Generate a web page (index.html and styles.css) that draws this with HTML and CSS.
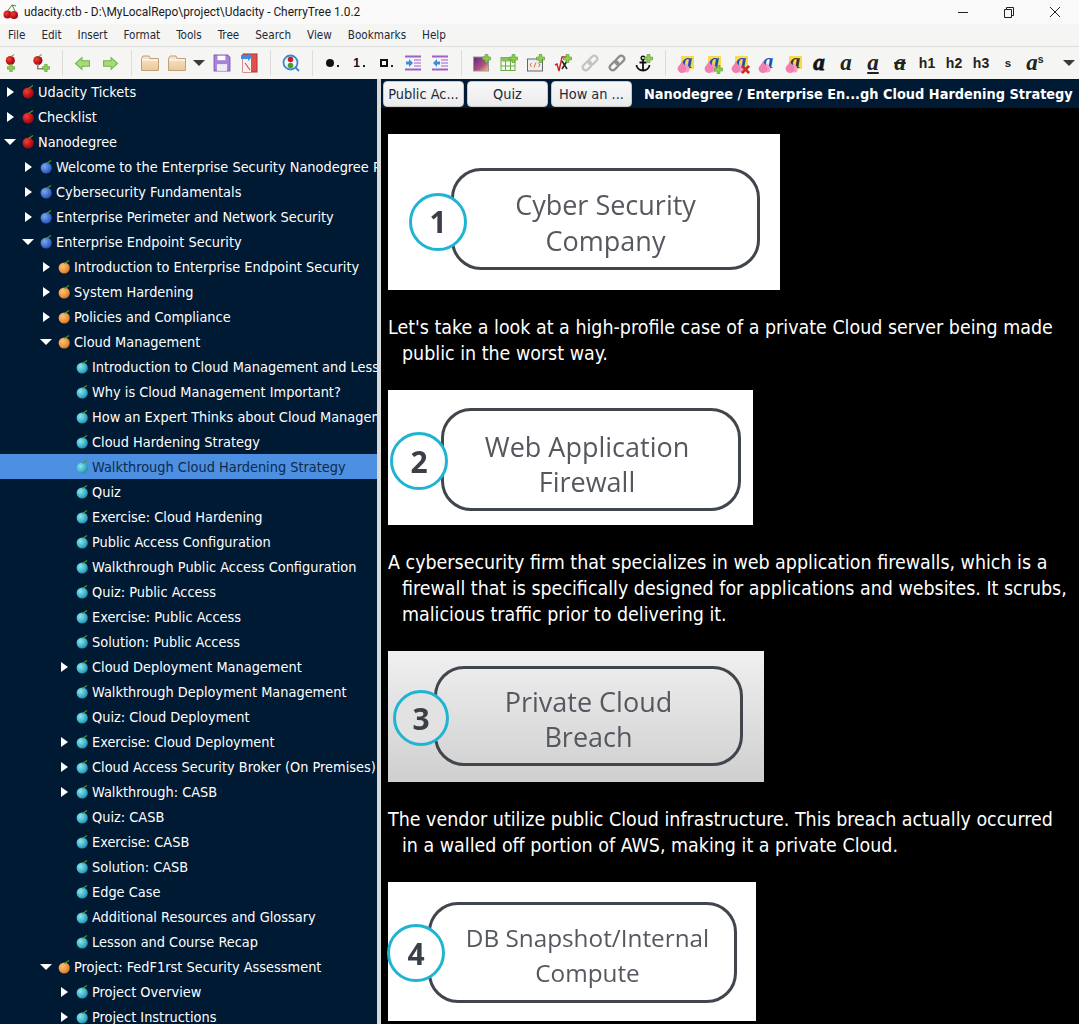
FILE: index.html
```html
<!DOCTYPE html>
<html lang="en">
<head>
<meta charset="utf-8">
<title>CherryTree</title>
<link rel="stylesheet" href="styles.css">
</head>
<body>
<svg class="defs" width="0" height="0" aria-hidden="true">
  <defs>
    <radialGradient id="gr" cx=".35" cy=".35" r=".75"><stop offset="0" stop-color="#f0403c"/><stop offset=".55" stop-color="#c4141a"/><stop offset="1" stop-color="#7c0c10"/></radialGradient>
    <radialGradient id="gb" cx=".35" cy=".35" r=".75"><stop offset="0" stop-color="#7aa8f0"/><stop offset=".6" stop-color="#3f6fd0"/><stop offset="1" stop-color="#24489a"/></radialGradient>
    <radialGradient id="go" cx=".35" cy=".35" r=".75"><stop offset="0" stop-color="#fbc27c"/><stop offset=".6" stop-color="#ef9540"/><stop offset="1" stop-color="#c46c20"/></radialGradient>
    <radialGradient id="gt" cx=".35" cy=".35" r=".75"><stop offset="0" stop-color="#8fe4ee"/><stop offset=".6" stop-color="#3fb5cc"/><stop offset="1" stop-color="#1f7f98"/></radialGradient>
    <linearGradient id="gf" x1="0" y1="0" x2="0" y2="1"><stop offset="0" stop-color="#f8e6cc"/><stop offset="1" stop-color="#e9c898"/></linearGradient>
    <linearGradient id="gi" x1="0" y1="0" x2="1" y2="1"><stop offset="0" stop-color="#5a2a72"/><stop offset=".6" stop-color="#b04f86"/><stop offset="1" stop-color="#f2cf6a"/></linearGradient>
    <symbol id="c-red" viewBox="0 0 14 14"><circle cx="6.2" cy="8" r="5.6" fill="url(#gr)"/><path d="M6.5 3.500 11 .6" stroke="#4c9a2a" stroke-width="1.200" fill="none"/></symbol>
    <symbol id="c-blue" viewBox="0 0 14 14"><circle cx="6.2" cy="8" r="5.6" fill="url(#gb)"/><path d="M6.5 3.500 11 .6" stroke="#4c9a2a" stroke-width="1.200" fill="none"/></symbol>
    <symbol id="c-orange" viewBox="0 0 14 14"><circle cx="6.2" cy="8" r="5.6" fill="url(#go)"/><path d="M6.5 3.500 11 .6" stroke="#4c9a2a" stroke-width="1.200" fill="none"/></symbol>
    <symbol id="c-teal" viewBox="0 0 14 14"><circle cx="6.2" cy="8" r="5.6" fill="url(#gt)"/><path d="M6.5 3.500 11 .6" stroke="#4c9a2a" stroke-width="1.200" fill="none"/></symbol>
    <symbol id="plus" viewBox="0 0 10 10"><path d="M3.500 .5h3v3h3v3h-3v3h-3v-3h-3v-3h3z" fill="#8fd14f" stroke="#5b9a2c" stroke-width=".8"/></symbol>
    <symbol id="drop" viewBox="0 0 14 12"><path d="M9 2C8.200 4 5.500 5.500 5.500 8a3.600 3.600 0 0 0 7.200 0C12.700 5.500 9.800 4 9 2z" fill="#f59cc6"/><path d="M5 0C4.200 3 .6 5 .6 7.800a4.400 4.200 0 0 0 8.800 0C9.400 5 5.800 3 5 0z" fill="#f27fb2"/></symbol>
    <symbol id="arrow-r" viewBox="0 0 7 10"><path d="M0 0 7 5 0 10z" fill="#fff"/></symbol>
    <symbol id="arrow-d" viewBox="0 0 12 6"><path d="M0 0h12L6 6z" fill="#fff"/></symbol>
    <symbol id="folder" viewBox="0 0 18 16"><path d="M.5 3.500 2 1h6l1 2.500h8.500v12H.5z" fill="url(#gf)" stroke="#c0a078"/><path d="M1 5h16" stroke="#fff"/></symbol>
    <symbol id="indent" viewBox="0 0 18 16"><path d="M1 1.500h16M1 14.500h16" stroke="#a060c8" stroke-width="2"/><path d="M10 5h7M10 8h7M10 11h7" stroke="#a060c8"/><path d="M2 6.500h3V4l4 4-4 4V9.500H2z" fill="#3c8ce0"/></symbol>
    <symbol id="outdent" viewBox="0 0 18 16"><path d="M1 1.500h16M1 14.500h16" stroke="#a060c8" stroke-width="2"/><path d="M10 5h7M10 8h7M10 11h7" stroke="#a060c8"/><path d="M9 6.500H6V4L2 8l4 4V9.500h3z" fill="#3c8ce0"/></symbol>
    <symbol id="link" viewBox="0 0 18 18"><g fill="none" stroke-width="2.200" transform="rotate(-45 9 9)"><rect x="0" y="6" width="10" height="6" rx="3"/><rect x="8" y="6" width="10" height="6" rx="3"/></g></symbol>
  </defs>
</svg>

<header class="titlebar">
  <svg class="app-icon" viewBox="0 0 16 16" width="16" height="16"><circle cx="4.500" cy="10.500" r="4" fill="url(#gr)"/><circle cx="11" cy="11" r="4" fill="url(#gr)"/><path d="M4.500 7 9 1l3 6" stroke="#4c8a2a" fill="none"/><path d="M9 1l4 1" stroke="#4c8a2a"/></svg>
  <span class="title-text">udacity.ctb - D:\MyLocalRepo\project\Udacity - CherryTree 1.0.2</span>
  <div class="winctl">
    <svg viewBox="0 0 46 20" width="46" height="20"><path d="M18 10.500h10" stroke="#222"/></svg>
    <svg viewBox="0 0 46 20" width="46" height="20"><path d="M18.500 7.500h7v8h-7z M20.500 7.500v-2h7v8h-2" fill="none" stroke="#222"/></svg>
    <svg viewBox="0 0 46 20" width="46" height="20"><path d="M18 5l10 10M28 5 18 15" stroke="#222" fill="none"/></svg>
  </div>
</header>

<nav class="menubar">
  <span>File</span><span>Edit</span><span>Insert</span><span>Format</span><span>Tools</span><span>Tree</span><span>Search</span><span>View</span><span>Bookmarks</span><span>Help</span>
</nav>

<div class="toolbar">
  <div class="tool t-a"><svg viewBox="0 0 20 22"><use href="#c-red" x="3" y="0" width="14" height="14"/><use href="#plus" x="5" y="12" width="10" height="10"/></svg></div>
  <div class="tool t-b"><svg viewBox="0 0 22 22"><use href="#c-red" x="1" y="0" width="14" height="14"/><path d="M7 12v6h8" stroke="#888" stroke-width="2" fill="none"/><use href="#plus" x="12" y="12" width="10" height="10"/></svg></div>
  <i class="sep"></i>
  <div class="tool"><svg viewBox="0 0 16 14" class="s16"><path d="M1 7l6-5.500v3h7v5H7v3z" fill="#a6dc78" stroke="#7ab050"/></svg></div>
  <div class="tool"><svg viewBox="0 0 16 14" class="s16"><path d="M15 7 9 1.500v3H2v5h7v3z" fill="#a6dc78" stroke="#7ab050"/></svg></div>
  <i class="sep"></i>
  <div class="tool pull"><svg viewBox="0 0 18 16" class="s18"><use href="#folder"/></svg></div>
  <div class="tool t-folder"><svg viewBox="0 0 18 16" class="s18"><use href="#folder"/></svg><svg viewBox="0 0 12 6" class="caret"><path d="M0 0h12L6 6z" fill="#3a3a3a"/></svg></div>
  <div class="tool"><svg viewBox="0 0 16 16"><path d="M1 1h12l2 2v12H1z" fill="#a884d8" stroke="#8460b8"/><rect x="4" y="1.500" width="7" height="4" fill="#fff"/><rect x="3.500" y="9" width="9" height="6" fill="#f0ecf6"/></svg></div>
  <div class="tool"><svg viewBox="0 0 18 20" class="s20"><rect x="3" y="1" width="14" height="18" fill="#e05050" stroke="#b03030"/><rect x="3" y="5" width="8" height="14" fill="#f6f0ee"/><path d="M5 10l5 7" stroke="#d03030"/><path d="M1 2h7V0l4 4-4 4V6H1z" fill="#3c8ce0"/></svg></div>
  <i class="sep"></i>
  <div class="tool"><svg viewBox="0 0 18 18" class="s20"><circle cx="8.500" cy="8.500" r="7" fill="#f4f8fc" stroke="#3c86d8" stroke-width="1.800"/><path d="M13.500 13.500 17 17" stroke="#3c86d8" stroke-width="2"/><circle cx="8.500" cy="5.500" r="2.800" fill="#cc2020"/><circle cx="8.500" cy="11.500" r="2.800" fill="#4f9a2c"/></svg></div>
  <i class="sep"></i>
  <div class="tool pull-1"><span class="bullet"></span><span class="dot"></span></div>
  <div class="tool num">1<span class="dot"></span></div>
  <div class="tool"><span class="square"></span><span class="dot"></span></div>
  <div class="tool"><svg viewBox="0 0 18 16" class="s16w"><use href="#indent"/></svg></div>
  <div class="tool"><svg viewBox="0 0 18 16" class="s16w"><use href="#outdent"/></svg></div>
  <i class="sep"></i>
  <div class="tool"><svg viewBox="0 0 18 18"><rect x=".5" y="3" width="15" height="14" fill="url(#gi)" stroke="#999"/><use href="#plus" x="9" y="0" width="9" height="9"/></svg></div>
  <div class="tool"><svg viewBox="0 0 18 18"><rect x="1" y="3.500" width="14" height="13" fill="#f4faee" stroke="#6aa84a"/><rect x="1" y="3.500" width="14" height="4" fill="#88c060"/><path d="M1 12h14M5.500 7v10M10.500 7v10" stroke="#6aa84a"/><use href="#plus" x="9" y="0" width="9" height="9"/></svg></div>
  <div class="tool"><svg viewBox="0 0 18 18"><rect x=".5" y="5" width="15" height="12" fill="#eee" stroke="#666"/><path d="M4.500 9 3 11l1.500 2M11.500 9l1.500 2-1.500 2M9 8.500 7 13.500" stroke="#e07030" fill="none"/><use href="#plus" x="9" y="0" width="9" height="9"/></svg></div>
  <div class="tool"><svg viewBox="0 0 18 18"><path d="M1 11l2-1 2 7 3-14h6" stroke="#d02020" fill="none" stroke-width="1.400"/><path d="M8 7l5 8M13 7l-5 8" stroke="#222" stroke-width="1.500"/><use href="#plus" x="9" y="0" width="9" height="9"/></svg></div>
  <div class="tool"><svg viewBox="0 0 18 18" class="link-l"><use href="#link"/></svg></div>
  <div class="tool"><svg viewBox="0 0 18 18" class="link-d"><use href="#link"/></svg></div>
  <div class="tool"><svg viewBox="0 0 18 18"><circle cx="8" cy="4" r="1.800" fill="none" stroke="#111" stroke-width="1.400"/><path d="M8 6v11M4.500 8.500h7M1.500 11c0 3 3 5.500 6.500 5.500s6.500-2.500 6.500-5.500" fill="none" stroke="#111" stroke-width="1.800"/><use href="#plus" x="9" y="0" width="9" height="9"/></svg></div>
  <i class="sep"></i>
  <div class="tool pull ink yellow"><b class="a blue">a</b><svg class="droplet"><use href="#drop"/></svg></div>
  <div class="tool ink yellow"><b class="a blue">a</b><svg class="droplet"><use href="#drop"/></svg><svg class="mark" viewBox="0 0 10 10"><use href="#plus"/></svg></div>
  <div class="tool ink yellow"><b class="a blue">a</b><svg class="droplet"><use href="#drop"/></svg><svg class="mark" viewBox="0 0 10 10"><path d="M1 1l8 8M9 1 1 9" stroke="#c83030" stroke-width="3"/></svg></div>
  <div class="tool ink"><b class="a blue">a</b><svg class="droplet"><use href="#drop"/></svg></div>
  <div class="tool ink yellow"><b class="a dark">a</b><svg class="droplet"><use href="#drop"/></svg></div>
  <div class="tool glyph"><b class="a heavy">a</b></div>
  <div class="tool glyph"><b class="a">a</b></div>
  <div class="tool glyph"><b class="a under">a</b></div>
  <div class="tool glyph"><b class="a strike">a</b></div>
  <div class="tool head">h1</div>
  <div class="tool head">h2</div>
  <div class="tool head">h3</div>
  <div class="tool head small">s</div>
  <div class="tool glyph"><b class="a">a</b><sup class="sup">s</sup></div>
  <div class="tool t-more"><svg viewBox="0 0 12 6" class="caret-more"><path d="M0 0h12L6 6z" fill="#3a3a3a"/></svg></div>
</div>

<main class="panes">
  <aside class="tree">
    <div class="row l0"><svg class="exp r"><use href="#arrow-r"/></svg><svg class="node"><use href="#c-red"/></svg><span>Udacity Tickets</span></div>
    <div class="row l0"><svg class="exp r"><use href="#arrow-r"/></svg><svg class="node"><use href="#c-red"/></svg><span>Checklist</span></div>
    <div class="row l0"><svg class="exp d"><use href="#arrow-d"/></svg><svg class="node"><use href="#c-red"/></svg><span>Nanodegree</span></div>
    <div class="row l1"><svg class="exp r"><use href="#arrow-r"/></svg><svg class="node"><use href="#c-blue"/></svg><span>Welcome to the Enterprise Security Nanodegree Program</span></div>
    <div class="row l1"><svg class="exp r"><use href="#arrow-r"/></svg><svg class="node"><use href="#c-blue"/></svg><span>Cybersecurity Fundamentals</span></div>
    <div class="row l1"><svg class="exp r"><use href="#arrow-r"/></svg><svg class="node"><use href="#c-blue"/></svg><span>Enterprise Perimeter and Network Security</span></div>
    <div class="row l1"><svg class="exp d"><use href="#arrow-d"/></svg><svg class="node"><use href="#c-blue"/></svg><span>Enterprise Endpoint Security</span></div>
    <div class="row l2"><svg class="exp r"><use href="#arrow-r"/></svg><svg class="node"><use href="#c-orange"/></svg><span>Introduction to Enterprise Endpoint Security</span></div>
    <div class="row l2"><svg class="exp r"><use href="#arrow-r"/></svg><svg class="node"><use href="#c-orange"/></svg><span>System Hardening</span></div>
    <div class="row l2"><svg class="exp r"><use href="#arrow-r"/></svg><svg class="node"><use href="#c-orange"/></svg><span>Policies and Compliance</span></div>
    <div class="row l2"><svg class="exp d"><use href="#arrow-d"/></svg><svg class="node"><use href="#c-orange"/></svg><span>Cloud Management</span></div>
    <div class="row l3"><i class="exp"></i><svg class="node"><use href="#c-teal"/></svg><span>Introduction to Cloud Management and Lessons</span></div>
    <div class="row l3"><i class="exp"></i><svg class="node"><use href="#c-teal"/></svg><span>Why is Cloud Management Important?</span></div>
    <div class="row l3"><i class="exp"></i><svg class="node"><use href="#c-teal"/></svg><span>How an Expert Thinks about Cloud Management</span></div>
    <div class="row l3"><i class="exp"></i><svg class="node"><use href="#c-teal"/></svg><span>Cloud Hardening Strategy</span></div>
    <div class="row l3 selected"><i class="exp"></i><svg class="node"><use href="#c-teal"/></svg><span>Walkthrough Cloud Hardening Strategy</span></div>
    <div class="row l3"><i class="exp"></i><svg class="node"><use href="#c-teal"/></svg><span>Quiz</span></div>
    <div class="row l3"><i class="exp"></i><svg class="node"><use href="#c-teal"/></svg><span>Exercise: Cloud Hardening</span></div>
    <div class="row l3"><i class="exp"></i><svg class="node"><use href="#c-teal"/></svg><span>Public Access Configuration</span></div>
    <div class="row l3"><i class="exp"></i><svg class="node"><use href="#c-teal"/></svg><span>Walkthrough Public Access Configuration</span></div>
    <div class="row l3"><i class="exp"></i><svg class="node"><use href="#c-teal"/></svg><span>Quiz: Public Access</span></div>
    <div class="row l3"><i class="exp"></i><svg class="node"><use href="#c-teal"/></svg><span>Exercise: Public Access</span></div>
    <div class="row l3"><i class="exp"></i><svg class="node"><use href="#c-teal"/></svg><span>Solution: Public Access</span></div>
    <div class="row l3"><svg class="exp r"><use href="#arrow-r"/></svg><svg class="node"><use href="#c-teal"/></svg><span>Cloud Deployment Management</span></div>
    <div class="row l3"><i class="exp"></i><svg class="node"><use href="#c-teal"/></svg><span>Walkthrough Deployment Management</span></div>
    <div class="row l3"><i class="exp"></i><svg class="node"><use href="#c-teal"/></svg><span>Quiz: Cloud Deployment</span></div>
    <div class="row l3"><svg class="exp r"><use href="#arrow-r"/></svg><svg class="node"><use href="#c-teal"/></svg><span>Exercise: Cloud Deployment</span></div>
    <div class="row l3"><svg class="exp r"><use href="#arrow-r"/></svg><svg class="node"><use href="#c-teal"/></svg><span>Cloud Access Security Broker (On Premises)</span></div>
    <div class="row l3"><svg class="exp r"><use href="#arrow-r"/></svg><svg class="node"><use href="#c-teal"/></svg><span>Walkthrough: CASB</span></div>
    <div class="row l3"><i class="exp"></i><svg class="node"><use href="#c-teal"/></svg><span>Quiz: CASB</span></div>
    <div class="row l3"><i class="exp"></i><svg class="node"><use href="#c-teal"/></svg><span>Exercise: CASB</span></div>
    <div class="row l3"><i class="exp"></i><svg class="node"><use href="#c-teal"/></svg><span>Solution: CASB</span></div>
    <div class="row l3"><i class="exp"></i><svg class="node"><use href="#c-teal"/></svg><span>Edge Case</span></div>
    <div class="row l3"><i class="exp"></i><svg class="node"><use href="#c-teal"/></svg><span>Additional Resources and Glossary</span></div>
    <div class="row l3"><i class="exp"></i><svg class="node"><use href="#c-teal"/></svg><span>Lesson and Course Recap</span></div>
    <div class="row l2"><svg class="exp d"><use href="#arrow-d"/></svg><svg class="node"><use href="#c-orange"/></svg><span>Project: FedF1rst Security Assessment</span></div>
    <div class="row l3"><svg class="exp r"><use href="#arrow-r"/></svg><svg class="node"><use href="#c-teal"/></svg><span>Project Overview</span></div>
    <div class="row l3"><svg class="exp r"><use href="#arrow-r"/></svg><svg class="node"><use href="#c-teal"/></svg><span>Project Instructions</span></div>
  </aside>

  <section class="content">
    <div class="tabbar">
      <button class="tab">Public Ac...</button>
      <button class="tab">Quiz</button>
      <button class="tab">How an ...</button>
      <span class="crumb">Nanodegree / Enterprise En...gh Cloud Hardening Strategy</span>
    </div>
    <article class="doc">
      <figure class="shot shot-1">
        <span class="badge">1</span>
        <div class="box"><span class="label">Cyber Security<br>Company</span></div>
      </figure>
      <p class="para"><span>Let's take a look at a high-profile case of a private Cloud server being made</span><span class="cont">public in the worst way.</span></p>
      <figure class="shot shot-2">
        <span class="badge">2</span>
        <div class="box"><span class="label">Web Application<br>Firewall</span></div>
      </figure>
      <p class="para"><span>A cybersecurity firm that specializes in web application firewalls, which is a</span><span class="cont">firewall that is specifically designed for applications and websites. It scrubs,</span><span class="cont">malicious traffic prior to delivering it.</span></p>
      <figure class="shot shot-3">
        <span class="badge">3</span>
        <div class="box"><span class="label">Private Cloud<br>Breach</span></div>
      </figure>
      <p class="para"><span>The vendor utilize public Cloud infrastructure. This breach actually occurred</span><span class="cont">in a walled off portion of AWS, making it a private Cloud.</span></p>
      <figure class="shot shot-4">
        <span class="badge">4</span>
        <div class="box"><span class="label">DB Snapshot/Internal<br>Compute</span></div>
      </figure>
    </article>
  </section>
</main>
</body>
</html>
```

FILE: styles.css
```css
* { box-sizing: border-box; }
html, body { margin: 0; height: 100%; }
body {
  width: 1079px;
  height: 1024px;
  overflow: hidden;
  display: flex;
  flex-direction: column;
  font-family: "DejaVu Sans Condensed", "DejaVu Sans", sans-serif;
  font-stretch: condensed;
  background: #f5f5f3;
}
.defs { position: absolute; }

.titlebar {
  height: 24px;
  flex: none;
  display: flex;
  align-items: center;
  background: #fafafa;
  padding-left: 3px;
}
.app-icon { flex: none; }
.title-text {
  margin-left: 5px;
  font: 11.9px Roboto, sans-serif;
  color: #1a1a1a;
  white-space: nowrap;
}
.winctl { margin-left: auto; display: flex; padding-right: 1px; }

.menubar {
  height: 23px;
  flex: none;
  display: flex;
  align-items: center;
  gap: 16px;
  padding-left: 8px;
  font-size: 11.6px;
  color: #1c2a3a;
  background: #f5f5f3;
  border-bottom: 1px solid #dddddb;
}

.toolbar {
  height: 32px;
  flex: none;
  display: flex;
  align-items: center;
  background: #f5f5f3;
}
.tool {
  width: 27px;
  height: 32px;
  flex: none;
  display: flex;
  align-items: center;
  justify-content: center;
  position: relative;
}
.tool svg { width: 18px; height: 18px; display: block; }
.tool.t-a { width: 22px; }
.tool.t-b { margin-left: 5.5px; }
.tool.pull { margin-left: -2px; }
.tool.pull-1 { margin-left: -1px; }
.tool svg.s16 { width: 18px; height: 15px; }
.tool svg.s18 { width: 18px; height: 16px; }
.tool svg.s20 { width: 18px; height: 20px; }
.tool svg.s16w { width: 18px; height: 16px; }
.tool.t-folder { width: 45px; justify-content: flex-start; padding-left: 4.5px; gap: 7px; }
.tool svg.caret { width: 12px; height: 6px; }
.tool.t-more { width: 21px; margin-left: 10px; }
.tool svg.caret-more { width: 12px; height: 6px; }
.sep {
  width: 1px;
  height: 26px;
  flex: none;
  margin: 0 7px;
  background: #dcdcda;
}
.bullet { width: 8px; height: 8px; border-radius: 50%; background: #111; }
.square { width: 8px; height: 8px; border: 2px solid #111; }
.dot { width: 2px; height: 2px; background: #222; margin-left: 3px; margin-top: 6px; }
.num { font: 700 12px "Liberation Sans", sans-serif; color: #111; }
.link-l { fill: none; stroke: #c4c4c4; }
.link-d { fill: none; stroke: #8c8c8c; }
.a {
  font: italic 700 23px/1 "Liberation Serif", serif;
  color: #222;
  position: relative;
  top: -1px;
}
.ink .a {
  position: absolute;
  left: 10px;
  top: 9px;
  width: 13px;
  height: 13px;
  line-height: 11px;
  text-align: center;
  font-size: 21px;
}
.yellow .a { background: #fcd84c; }
.a.blue { color: #1a50b8; }
.a.dark { color: #333; }
.a.heavy { -webkit-text-stroke: .8px #111; color: #111; }
.a.under { text-decoration: underline; text-decoration-thickness: 1.5px; text-underline-offset: 2px; }
.a.strike { text-decoration: line-through; text-decoration-thickness: 1.5px; }
.tool svg.droplet { position: absolute; left: 6px; top: 14px; width: 14px; height: 12px; }
.tool svg.mark { position: absolute; left: 16px; top: 18px; width: 9px; height: 9px; }
.head { font: 700 14px "Liberation Sans", sans-serif; color: #222; }
.head.small { font-size: 11.500px; }
.sup { font: 700 10.500px "Liberation Sans", sans-serif; align-self: flex-start; margin-top: 6px; color: #222; }

.panes {
  flex: 1;
  min-height: 0;
  display: flex;
}
.tree {
  width: 381px;
  flex: none;
  overflow: hidden;
  background: #001a33;
  border-right: 4px solid #d9d9d7;
}
.row {
  height: 25px;
  display: flex;
  align-items: center;
  white-space: nowrap;
  color: #fff;
  font-size: 14.4px;
}
.row.selected { background: #4d8fe0; color: #0c2a4e; }
.l0 { padding-left: 7px; }
.l1 { padding-left: 25px; }
.l2 { padding-left: 43px; }
.l3 { padding-left: 61px; }
.exp { width: 13px; height: 10px; flex: none; }
.exp.r { width: 7px; margin-right: 6px; }
.exp.d { width: 12px; height: 6px; margin-left: -3px; margin-right: 4px; }
.node { width: 14px; height: 14px; flex: none; margin-left: 2px; }
.row span { margin-left: 2px; }

.content {
  flex: 1;
  min-width: 0;
  display: flex;
  flex-direction: column;
  background: #000;
}
.tabbar {
  height: 29px;
  flex: none;
  display: flex;
  align-items: center;
  gap: 3px;
  padding-left: 2px;
  background: #001a33;
}
.tab {
  width: 81px;
  height: 26px;
  flex: none;
  padding: 0;
  border: 1px solid #c8c8c8;
  border-radius: 4px;
  background: linear-gradient(#f8f8f8, #ebebeb);
  color: #1c2a3a;
  font: 14.4px "DejaVu Sans Condensed", "DejaVu Sans", sans-serif;
  font-stretch: condensed;
  white-space: nowrap;
}
.crumb {
  margin-left: 9px;
  color: #fff;
  font-size: 14.4px;
  font-weight: 700;
  white-space: nowrap;
}
.doc {
  flex: 1;
  min-height: 0;
  overflow: hidden;
  padding: 26px 0 0 7px;
}
.para {
  margin: 25px 0 23px;
  color: #fff;
  font-size: 19.45px;
  line-height: 26px;
}
.para span { display: block; white-space: nowrap; }
.para .cont { padding-left: 14px; }

.shot {
  position: relative;
  margin: 0;
  display: flex;
  background: #fff;
  color: #55595f;
  font: 27px/36px "Open Sans", sans-serif;
  font-stretch: normal;
  text-align: center;
}
.box {
  display: flex;
  align-items: center;
  justify-content: center;
  border: 3px solid #41464d;
  border-radius: 30px;
  filter: blur(.4px);
}
.label { position: relative; }
.badge {
  position: absolute;
  z-index: 1;
  display: flex;
  align-items: center;
  justify-content: center;
  width: 58px;
  height: 58px;
  border: 3px solid #1fb4d2;
  border-radius: 50%;
  background: #fff;
  color: #3b4048;
  font-weight: 700;
  font-size: 30px;
  filter: blur(.4px);
}
.shot-1 { width: 392px; height: 156px; padding: 34px 20px 20px 63px; }
.shot-1 .box { width: 309px; height: 102px; }
.shot-1 .label { top: 4px; }
.shot-1 .badge { left: 21px; top: 59px; }
.shot-2 { width: 365px; height: 135px; padding: 18px 12px 14px 53px; line-height: 35px; }
.shot-2 .box { width: 300px; height: 103px; }
.shot-2 .label { top: 4px; left: -4px; }
.shot-2 .badge { left: 2px; top: 42px; }
.shot-3 {
  width: 376px;
  height: 131px;
  padding: 15px 21px 16px 46px;
  background: linear-gradient(#f0f0f0, #cfcfcf);
  line-height: 35px;
}
.shot-3 .box { width: 309px; height: 100px; }
.shot-3 .label { top: 3px; }
.shot-3 .badge { left: 5px; top: 39px; width: 56px; height: 56px; background: #e2e2e2; }
.shot-4 { width: 368px; height: 139px; padding: 20px 19px 18px 40px; font-size: 24.3px; line-height: 35px; }
.shot-4 .box { width: 309px; height: 101px; }
.shot-4 .label { top: 2px; left: 5px; }
.shot-4 .badge { left: -1px; top: 42px; }
```
